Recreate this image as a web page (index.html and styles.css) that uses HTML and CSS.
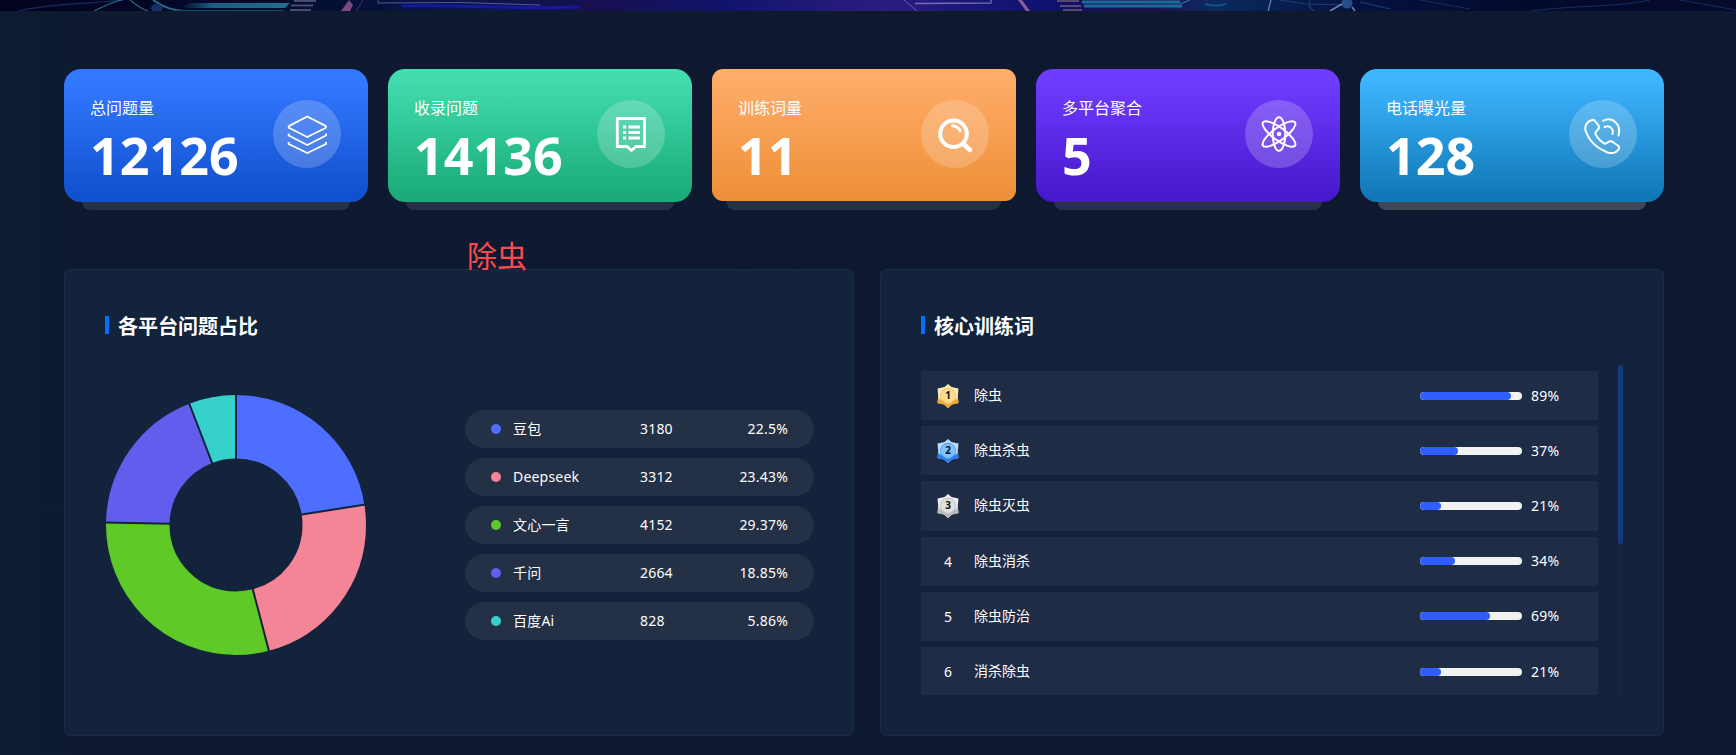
FILE: index.html
```html
<!DOCTYPE html>
<html lang="zh-CN">

<head>
    <meta charset="UTF-8">
    <meta name="viewport" content="width=device-width, initial-scale=1.0">
    <title>数据大屏</title>
    <link rel="stylesheet" href="styles.css">
</head>

<body>
    <div class="banner">
        <svg viewBox="0 0 1736 11" preserveAspectRatio="none">
            <defs>
                <linearGradient id="bannerBg" x1="0" x2="1" y1="0" y2="0">
                    <stop offset="0" stop-color="#03031f" />
                    <stop offset="0.15" stop-color="#020a2a" />
                    <stop offset="0.27" stop-color="#0a1748" />
                    <stop offset="0.34" stop-color="#17104f" />
                    <stop offset="0.42" stop-color="#12146c" />
                    <stop offset="0.51" stop-color="#2b1d80" />
                    <stop offset="0.6" stop-color="#0e126f" />
                    <stop offset="0.66" stop-color="#1d114f" />
                    <stop offset="0.7" stop-color="#0b2a5e" />
                    <stop offset="0.78" stop-color="#041240" />
                    <stop offset="0.88" stop-color="#040a2c" />
                    <stop offset="1" stop-color="#060a2b" />
                </linearGradient>
                <linearGradient id="beam" x1="0" x2="1" y1="0" y2="0">
                    <stop offset="0" stop-color="#1a5f86" stop-opacity="0" />
                    <stop offset="0.3" stop-color="#1a5f86" />
                    <stop offset="1" stop-color="#1c6f90" />
                </linearGradient>
            </defs>
            <rect width="1736" height="11" fill="url(#bannerBg)" />
            <g fill="none" stroke="#1b3f6e" stroke-width="1.2">
                <path d="M18 11C50 3 90 4 124 0" stroke="#122c60" />
                <path d="M94 11C105 6 112 2 122 0" stroke="#2c6a80" />
                <path d="M130 0C136 5 141 9 148 11" stroke="#2c6a80" />
                <path d="M153 0C165 8 172 10 185 11" stroke="#2b6d8b" stroke-width="2" />
                <path d="M1268 11L1271 0" stroke="#7385a8" />
                <path d="M1279 0L1306 4L1350 5M1310 0L1309 6L1314 11" />
                <path d="M1360 2L1390 9" />
            </g>
            <ellipse cx="157" cy="8" rx="6" ry="4" fill="#16306e" />
            <path d="M190 3H290L285 8H180Z" fill="url(#beam)" />
            <path d="M176 10.5H284" stroke="#114c6c" />
            <path d="M294 1H316M291 5.5H313M290 10H311" stroke="#4b4b6f" stroke-width="2" />
            <path d="M349 0L341 11H350L353 5Z" fill="#7e4a85" />
            <path d="M363 0L356 11" stroke="#47306f" />
            <path d="M378 0V3L460 2.5L540 5" fill="none" stroke="#57579a" />
            <path d="M402 6C460 5 520 9 579 7" fill="none" stroke="#1418a0" stroke-width="3" />
            <path d="M904 0L917 11" stroke="#6161a0" />
            <path d="M915 3.5L991 3V0" fill="none" stroke="#6f6fae" stroke-width="1.3" />
            <path d="M1022 0L1030 11H1026L1018 0Z" fill="#925c93" />
            <path d="M1057 1H1079M1060 6H1081M1063 10H1082" stroke="#55496f" stroke-width="2" />
            <path d="M1082 2H1180M1084 6H1182" stroke="#1c6a96" stroke-width="3" />
            <path d="M1180 4L1190 0" stroke="#3481ac" />
            <path d="M1205 4C1212 6 1220 6 1226 4" fill="none" stroke="#15508a" stroke-width="2" />
            <circle cx="1347" cy="3" r="5.5" fill="#244e8b" />
            <path d="M1330 11L1342 4M1352 7L1355 11" stroke="#7385a8" stroke-width="1.5" />
            <path d="M1420 0L1470 9M1530 11C1580 5 1620 7 1650 0M1680 0L1736 10" fill="none" stroke="#152f63" />
        </svg>
    </div>

    <div class="container">
        <div class="cards">
            <div class="card blue">
                <div class="info">
                    <div class="label">总问题量</div>
                    <div class="num">12126</div>
                </div>
                <div class="icon">
                    <svg viewBox="0 0 40 40" fill="none" stroke="#fff" stroke-width="1.9" stroke-linejoin="round">
                        <path d="M20.3 2.5L38.5 11.8Q39.5 13 38.5 14L20.3 23L2.2 14Q1.2 13 2.2 11.8Z" />
                        <path d="M1.7 19.5V21.5L20.3 31L39 21.5V19.5" />
                        <path d="M1.7 28V30L20.3 39L39 30V28" />
                    </svg>
                </div>
            </div>
            <div class="card green">
                <div class="info">
                    <div class="label">收录问题</div>
                    <div class="num">14136</div>
                </div>
                <div class="icon">
                    <svg viewBox="0 0 40 40" fill="none" stroke="#fff">
                        <path d="M6.3 4.5H33.5V32.5H25L20.5 36.500L16 32.5H6.300Z" stroke-width="2.8" />
                        <path d="M12 13H15M12 18.500H15M12 24H15M17.5 13H29M17.5 18.500H29M17.5 24H29" stroke-width="2.8" />
                    </svg>
                </div>
            </div>
            <div class="card orange">
                <div class="info">
                    <div class="label">训练词量</div>
                    <div class="num">11</div>
                </div>
                <div class="icon">
                    <svg viewBox="0 0 40 40" fill="none" stroke="#fff" stroke-linecap="round">
                        <circle cx="18.5" cy="19.7" r="13.3" stroke-width="4" />
                        <path d="M28.5 30L35 36" stroke-width="4.5" />
                        <path d="M17.5 11.8Q22.8 12.3 25.2 16.8" stroke-width="3" />
                    </svg>
                </div>
            </div>
            <div class="card purple">
                <div class="info">
                    <div class="label">多平台聚合</div>
                    <div class="num">5</div>
                </div>
                <div class="icon">
                    <svg viewBox="0 0 40 40" fill="none" stroke="#fff" stroke-width="2">
                        <ellipse cx="20" cy="20" rx="6.3" ry="16.8" />
                        <ellipse cx="20" cy="20" rx="6.3" ry="19.8" transform="rotate(54 20 20)" />
                        <ellipse cx="20" cy="20" rx="6.3" ry="19.8" transform="rotate(-54 20 20)" />
                        <circle cx="20" cy="20" r="2.3" fill="#fff" stroke="none" />
                    </svg>
                </div>
            </div>
            <div class="card cyan">
                <div class="info">
                    <div class="label">电话曝光量</div>
                    <div class="num">128</div>
                </div>
                <div class="icon">
                    <svg viewBox="0 0 40 40" fill="none" stroke="#fff" stroke-width="2" stroke-linecap="round" stroke-linejoin="round">
                        <path d="M9 6Q10.5 5.500 12 7L15.500 11.500Q17 14 14.500 16L12.800 18Q12 19 13 21Q16.500 27 21.500 29.500Q23 30 24.500 28.500Q26.500 26.500 29 27.500L35.500 32Q37 33.500 35.500 35.500Q32 40.500 24.500 38.500Q8 32 2.800 17.500C1 11.500 4.500 7 9 6Z" />
                        <path d="M20 6.800C30 2 38.500 11 35.500 21.500" />
                        <path d="M21.500 13C26.500 10.800 31 15 29.500 20" />
                    </svg>
                </div>
            </div>
        </div>

        <div class="barrage">除虫</div>

        <div class="panels">
            <div class="panel">
                <h3><span>各平台问题占比</span></h3>
                <div class="chart-box">
                    <svg class="pie" viewBox="-131 -131 262 262">
                        <g fill="none" stroke-width="63.5" transform="rotate(-90)">
                            <circle r="98.25" pathLength="100" stroke="#4e6eff" stroke-dasharray="22.5 77.5" />
                            <circle r="98.25" pathLength="100" stroke="#f48596" stroke-dasharray="23.43 76.57" stroke-dashoffset="-22.5" />
                            <circle r="98.25" pathLength="100" stroke="#5fc927" stroke-dasharray="29.37 70.63" stroke-dashoffset="-45.93" />
                            <circle r="98.25" pathLength="100" stroke="#625eed" stroke-dasharray="18.85 81.15" stroke-dashoffset="-75.3" />
                            <circle r="98.25" pathLength="100" stroke="#37d1cc" stroke-dasharray="5.85 94.15" stroke-dashoffset="-94.15" />
                        </g>
                        <g stroke="#13233b" stroke-width="2">
                            <path d="M0 -65V-131" />
                            <path d="M0 -65V-131" transform="rotate(81)" />
                            <path d="M0 -65V-131" transform="rotate(165.35)" />
                            <path d="M0 -65V-131" transform="rotate(271.08)" />
                            <path d="M0 -65V-131" transform="rotate(338.94)" />
                        </g>
                    </svg>
                    <ul class="legend">
                        <li><i class="c1"></i><span class="name">豆包</span><span class="val">3180</span><span class="per">22.5%</span></li>
                        <li><i class="c2"></i><span class="name">Deepseek</span><span class="val">3312</span><span class="per">23.43%</span></li>
                        <li><i class="c3"></i><span class="name">文心一言</span><span class="val">4152</span><span class="per">29.37%</span></li>
                        <li><i class="c4"></i><span class="name">千问</span><span class="val">2664</span><span class="per">18.85%</span></li>
                        <li><i class="c5"></i><span class="name">百度Ai</span><span class="val">828</span><span class="per">5.86%</span></li>
                    </ul>
                </div>
            </div>

            <div class="panel words">
                <h3><span>核心训练词</span></h3>
                <div class="word-box">
                    <ul class="word-list">
                        <li>
                            <span class="rank"><svg class="medal gold" viewBox="0 0 22 24">
                                <path class="star" d="M11 0L14.5 3L21.5 4.5L20.8 12L21.5 19L15 20.500L11 24L7 20.500L.5 19L1.200 12L.5 4.500L7.500 3Z" />
                                <path class="low" d="M1.100 14L.5 19L7 20.500L11 24L15 20.500L21.500 19L20.900 14L11 20Z" />
                                <circle cx="11" cy="11.800" r="7.500" /><text x="11" y="15.200">1</text>
                            </svg></span>
                            <span class="word">除虫</span>
                            <div class="bar"><div style="width: 89%"></div></div><span class="rate">89%</span>
                        </li>
                        <li>
                            <span class="rank"><svg class="medal azure" viewBox="0 0 22 24">
                                <path class="star" d="M11 0L14.5 3L21.5 4.5L20.8 12L21.5 19L15 20.500L11 24L7 20.500L.5 19L1.200 12L.5 4.500L7.500 3Z" />
                                <path class="low" d="M1.100 14L.5 19L7 20.500L11 24L15 20.500L21.500 19L20.900 14L11 20Z" />
                                <circle cx="11" cy="11.800" r="7.500" /><text x="11" y="15.200">2</text>
                            </svg></span>
                            <span class="word">除虫杀虫</span>
                            <div class="bar"><div style="width: 37%"></div></div><span class="rate">37%</span>
                        </li>
                        <li>
                            <span class="rank"><svg class="medal silver" viewBox="0 0 22 24">
                                <path class="star" d="M11 0L14.5 3L21.5 4.5L20.8 12L21.5 19L15 20.500L11 24L7 20.500L.5 19L1.200 12L.5 4.500L7.500 3Z" />
                                <path class="low" d="M1.100 14L.5 19L7 20.500L11 24L15 20.500L21.500 19L20.900 14L11 20Z" />
                                <circle cx="11" cy="11.800" r="7.500" /><text x="11" y="15.200">3</text>
                            </svg></span>
                            <span class="word">除虫灭虫</span>
                            <div class="bar"><div style="width: 21%"></div></div><span class="rate">21%</span>
                        </li>
                        <li>
                            <span class="rank">4</span>
                            <span class="word">除虫消杀</span>
                            <div class="bar"><div style="width: 34%"></div></div><span class="rate">34%</span>
                        </li>
                        <li>
                            <span class="rank">5</span>
                            <span class="word">除虫防治</span>
                            <div class="bar"><div style="width: 69%"></div></div><span class="rate">69%</span>
                        </li>
                        <li>
                            <span class="rank">6</span>
                            <span class="word">消杀除虫</span>
                            <div class="bar"><div style="width: 21%"></div></div><span class="rate">21%</span>
                        </li>
                    </ul>
                    <div class="scrollbar"><div class="thumb"></div></div>
                </div>
            </div>
        </div>
    </div>
</body>

</html>
```
FILE: styles.css
```css
* {
    box-sizing: border-box;
}

body {
    margin: 0;
    height: 755px;
    overflow: hidden;
    position: relative;
    background: linear-gradient(to right, #0e1a2f, #0e1830);
    color: #fff;
    font-family: "Noto Sans", "Noto Sans CJK SC", sans-serif;
    font-size: 14px;
}

ul {
    list-style: none;
    margin: 0;
    padding: 0;
}

.banner {
    height: 11px;
}

.banner svg {
    display: block;
    width: 100%;
    height: 11px;
}

.container {
    width: 1600px;
    margin-left: 64px;
    padding-top: 58px;
}

.cards {
    display: flex;
    gap: 20px;
    height: 133px;
}

.card {
    position: relative;
    flex: 1;
    display: flex;
    justify-content: space-between;
    padding: 27px 27px 0 26px;
    border-radius: 17px;
}

/* plate under the card */
.card::after {
    content: "";
    position: absolute;
    left: 18px;
    right: 18px;
    bottom: -8px;
    height: 8px;
    border-radius: 0 0 9px 9px;
    background: #283143;
}

.blue {
    background: linear-gradient(#3379ff 8%, #1150cf 95%);
}

.green {
    background: linear-gradient(#44ddb0 5%, #1aab79 95%);
}

.orange {
    height: 132px;
    border-radius: 11px;
    background: linear-gradient(#ffad69 5%, #ee9039 95%);
}

.orange::after {
    left: 14px;
    right: 15px;
    bottom: -9px;
    height: 9px;
}

.purple {
    background: linear-gradient(#6f3cff 8%, #4818cd 95%);
}

.cyan {
    background: linear-gradient(#3eb5ff 8%, #1078b6 95%);
}

.cyan::after {
    background: #434859;
}

.label {
    font-size: 16px;
    line-height: 24px;
}

.num {
    font-size: 52px;
    font-weight: bold;
    line-height: 60px;
    margin-top: 5px;
}

.icon {
    width: 68px;
    height: 68px;
    margin-top: 4px;
    border-radius: 50%;
    background: rgba(255, 255, 255, 0.2);
    display: flex;
    align-items: center;
    justify-content: center;
}

.icon svg {
    width: 40px;
    height: 40px;
}

.barrage {
    position: absolute;
    left: 467px;
    top: 234px;
    font-size: 30px;
    line-height: 44px;
    color: #fb4b4e;
    z-index: 2;
}

.panels {
    display: flex;
    gap: 26px;
    margin-top: 67px;
}

.panel {
    width: 790px;
    height: 467px;
    padding: 40px;
    border: 1px solid #1b2b43;
    border-radius: 6px;
    background: #13233b;
}

.words {
    width: 784px;
}

.panel h3 {
    display: flex;
    align-items: center;
    gap: 9px;
    height: 30px;
    margin: 0;
    font-size: 20px;
    line-height: 30px;
}

.panel h3 span {
    padding-top: 3px;
}

.panel h3::before {
    content: "";
    width: 4px;
    height: 18px;
    background: #0571fa;
}

.chart-box {
    display: flex;
    justify-content: space-between;
    align-items: flex-start;
    margin: 54px -1px 0 0;
}

.pie {
    width: 262px;
    height: 262px;
}

.legend {
    width: 349px;
    margin-top: 16px;
}

.legend li {
    display: flex;
    align-items: center;
    height: 38px;
    margin-bottom: 10px;
    padding: 0 26px;
    border-radius: 19px;
    background: #233046;
}

.legend i {
    width: 10px;
    height: 10px;
    margin-right: 12px;
    border-radius: 50%;
}

.legend span {
    padding-bottom: 2px;
    letter-spacing: 0.2px;
}

.c1 { background: #4e6eff; }
.c2 { background: #f48596; }
.c3 { background: #5fc927; }
.c4 { background: #625eed; }
.c5 { background: #37d1cc; }

.name {
    width: 127px;
}

.per {
    flex: 1;
    text-align: right;
}

.word-box {
    display: flex;
    justify-content: space-between;
    height: 330px;
    margin-top: 25px;
}

.word-list {
    width: 677px;
    overflow: hidden;
}

.word-list li {
    display: flex;
    align-items: center;
    height: 49.2px;
    margin-top: 6px;
    padding-right: 37px;
    background: #1f2c45;
}

.rank {
    display: flex;
    justify-content: center;
    width: 53px;
    padding-left: 1px;
}

.word {
    flex: 1;
    padding-bottom: 3px;
}

.medal {
    width: 22px;
    height: 24px;
}

.medal text {
    font-size: 10px;
    font-weight: bold;
    text-anchor: middle;
    fill: #111;
}

.gold .star { fill: #fbe9b8; }
.gold .low { fill: #eda92c; }
.gold circle { fill: #fbdc90; stroke: #f2c766; }

.azure .star { fill: #b5dcfb; }
.azure .low { fill: #2a7fea; }
.azure circle { fill: #7fc1fd; stroke: #4da0f5; }

.silver .star { fill: #ececec; }
.silver .low { fill: #b9b9b9; }
.silver circle { fill: #e0e0e0; stroke: #c3c3c3; }

.bar {
    width: 102px;
    height: 8px;
    border-radius: 4px;
    background: #f2f2f2;
    overflow: hidden;
}

.bar div {
    height: 8px;
    border-radius: 4px;
    background: #305dfd;
}

.rate {
    width: 30px;
    margin-left: 9px;
    padding-bottom: 1px;
    white-space: nowrap;
    letter-spacing: 0.2px;
}

.scrollbar {
    width: 5px;
    background: #18273f;
}

.thumb {
    height: 179px;
    border-radius: 3px;
    background: #17397f;
}
```
